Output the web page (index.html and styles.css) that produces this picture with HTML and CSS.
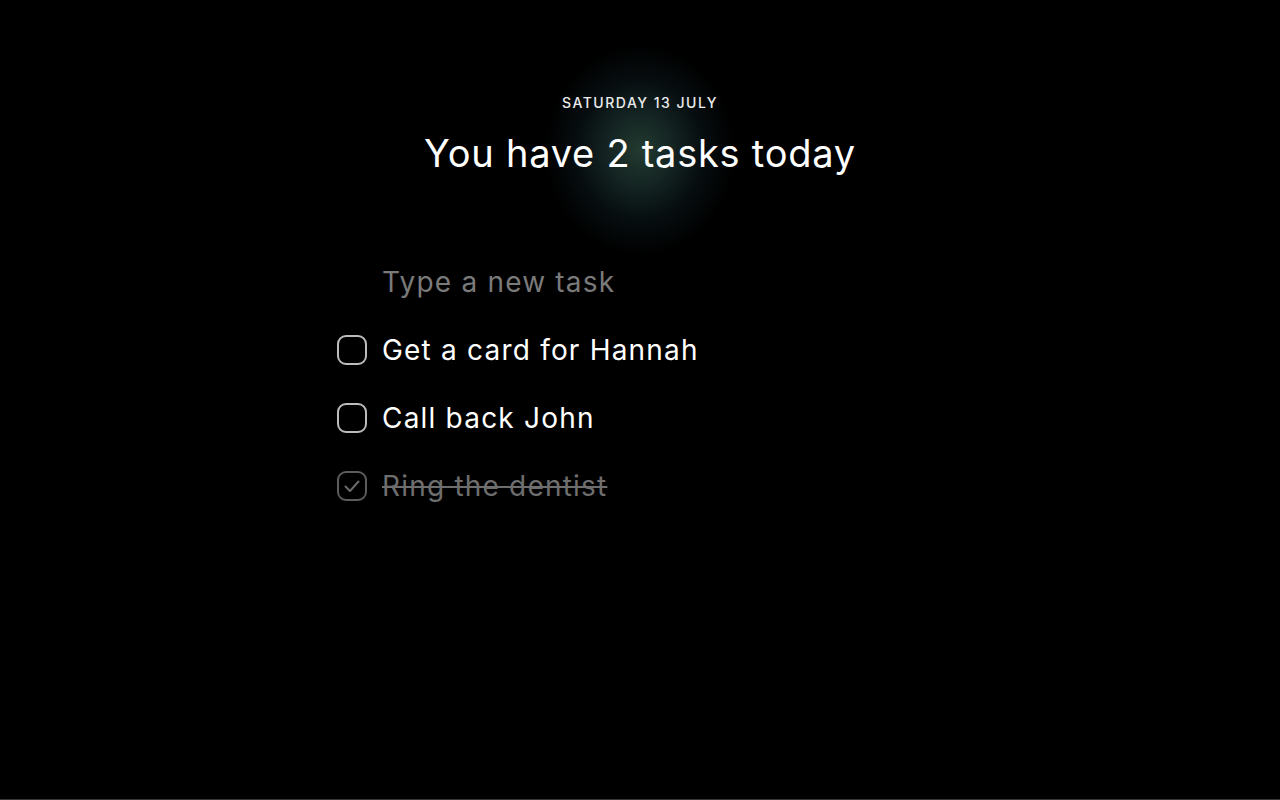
FILE: index.html
```html
<!DOCTYPE html>
<html lang="en">
<head>
<meta charset="utf-8">
<title>Tasks</title>
<link rel="stylesheet" href="styles.css">
</head>
<body>
<main class="app">
  <header class="head">
    <p class="date">SATURDAY 13 JULY</p>
    <h1 class="title">You have 2 tasks today</h1>
  </header>
  <ul class="list">
    <li class="row">
      <span class="spacer"></span>
      <input class="new-task" type="text" placeholder="Type a new task">
    </li>
    <li class="row">
      <span class="box"></span>
      <span class="label">Get a card for Hannah</span>
    </li>
    <li class="row">
      <span class="box"></span>
      <span class="label">Call back John</span>
    </li>
    <li class="row done">
      <span class="box">
        <svg viewBox="0 0 30 30" width="30" height="30"><path d="M8.5 15.5 L13 20 L21.5 10.5" fill="none" stroke="currentColor" stroke-width="2" stroke-linecap="round" stroke-linejoin="round"/></svg>
      </span>
      <span class="label">Ring the dentist</span>
    </li>
  </ul>
</main>
</body>
</html>
```

FILE: styles.css
```css
html, body {
  margin: 0;
  padding: 0;
  height: 100%;
}
body {
  background: #000;
  font-family: "Inter", "Lato", "Liberation Sans", sans-serif;
  color: #fff;
}
.app {
  height: 799px;
  border-bottom: 1px solid #343a39;
  background:
    radial-gradient(ellipse 95px 105px at 640px 150px,
      rgba(34, 58, 48, 1) 0%,
      rgba(22, 40, 38, 0.9) 35%,
      rgba(12, 24, 28, 0.6) 65%,
      rgba(0, 0, 0, 0) 100%),
    #000;
  display: flex;
  flex-direction: column;
  align-items: center;
}
.head {
  padding-top: 94px;
  display: flex;
  flex-direction: column;
  align-items: center;
}
.date {
  margin: 0;
  font-size: 14px;
  line-height: 18px;
  font-weight: 500;
  letter-spacing: 1.5px;
  color: #ececec;
}
.title {
  margin: 19px 0 0;
  font-size: 38px;
  line-height: 44px;
  font-weight: 400;
  letter-spacing: 0.75px;
  color: #fff;
}
.list {
  list-style: none;
  margin: 73px 0 0;
  padding: 0;
  width: 606px;
}
.row {
  height: 68px;
  display: flex;
  align-items: center;
  gap: 15px;
  font-size: 28px;
  letter-spacing: 1.2px;
}
.spacer {
  width: 30px;
  flex: none;
}
.new-task {
  flex: 1;
  background: transparent;
  border: none;
  outline: none;
  padding: 0;
  font: inherit;
  letter-spacing: inherit;
  color: #fff;
}
.new-task::placeholder {
  color: #7a7a7a;
}
.box {
  width: 30px;
  height: 30px;
  box-sizing: border-box;
  border: 2px solid #bcbcbc;
  border-radius: 9px;
  flex: none;
  position: relative;
  color: #6a6a6a;
}
.box svg {
  position: absolute;
  left: -2px;
  top: -2px;
}
.label {
  color: #fff;
}
.done .box {
  border-color: #5c5c5c;
}
.done .label {
  color: #6e6e6e;
  text-decoration: line-through;
  text-decoration-thickness: 2px;
}
```
